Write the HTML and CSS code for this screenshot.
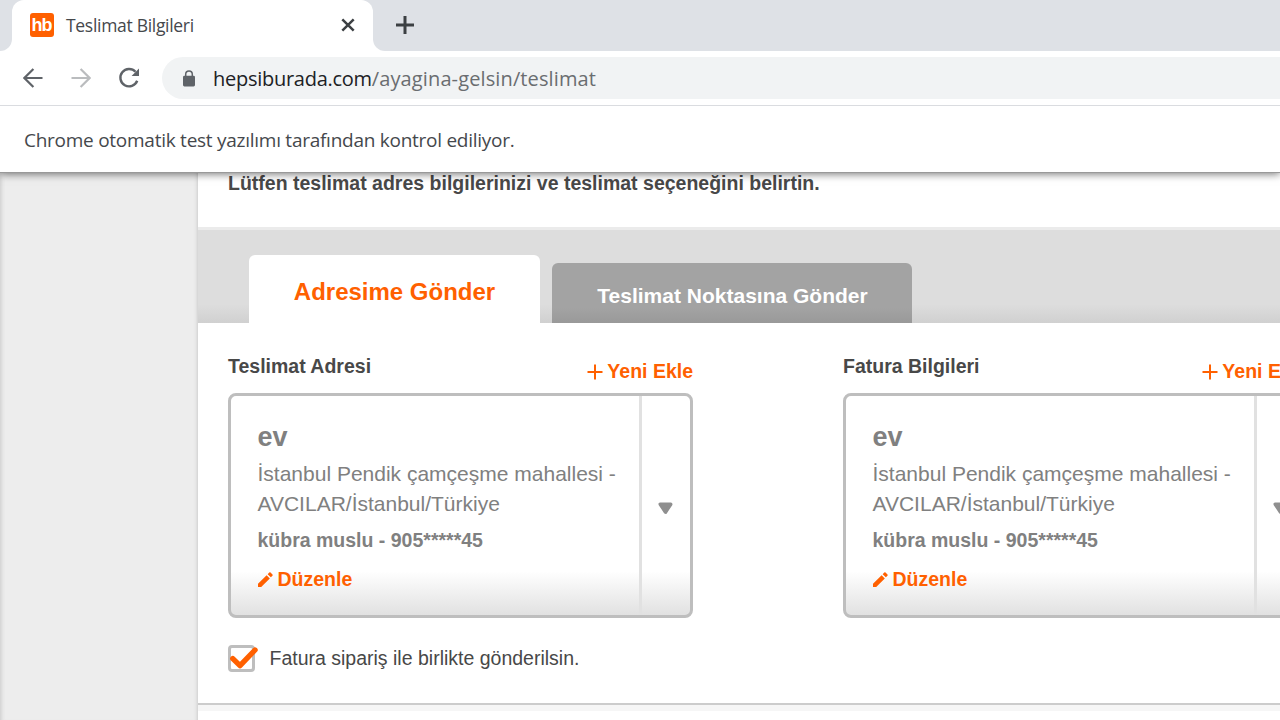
FILE: index.html
```html
<!DOCTYPE html>
<html lang="tr">
<head>
<meta charset="utf-8">
<title>Teslimat Bilgileri</title>
<link rel="stylesheet" href="styles.css">
</head>
<body>
<header class="browser">
  <div class="tabstrip">
    <div class="prev-tab"></div>
    <div class="tab">
      <span class="favicon">hb</span>
      <span class="tab-title">Teslimat Bilgileri</span>
      <svg class="close" width="14" height="14" viewBox="0 0 14 14"><path d="M1.3 1.3 12.7 12.7M12.7 1.3 1.3 12.7" fill="none" stroke="#3c4043" stroke-width="2.5"/></svg>
    </div>
    <div class="strip-rest">
      <svg width="18" height="18" viewBox="0 0 18 18"><path d="M9 0V18M0 9H18" fill="none" stroke="#3c4043" stroke-width="3"/></svg>
    </div>
  </div>
  <nav class="toolbar">
    <svg class="nav-icon" width="20" height="20" viewBox="0 0 20 20"><path d="M19.5 10H1.8M10.4 1 1.4 10l9 9" fill="none" stroke="#5f6368" stroke-width="2.2"/></svg>
    <svg class="nav-icon" width="20" height="20" viewBox="0 0 20 20"><path d="M.5 10h17.7M9.6 1l9 9-9 9" fill="none" stroke="#babcbe" stroke-width="2.2"/></svg>
    <svg class="nav-icon" width="22" height="22" viewBox="0 0 22 22"><path d="M17.5 4.8A8.7 8.7 0 1 0 19.2 13.8" fill="none" stroke="#5f6368" stroke-width="2.4"/><path d="M21 1.6v7.4h-7.4z" fill="#5f6368"/></svg>
    <div class="address">
      <svg width="12" height="17" viewBox="0 0 12 17"><rect y="5.8" width="12" height="10.6" rx="1.4" fill="#5f6368"/><path d="M2.7 6.5V4.2a3.3 3.3 0 0 1 6.6 0v2.3" fill="none" stroke="#5f6368" stroke-width="1.5"/></svg>
      <span class="url"><span class="host">hepsiburada.com</span>/ayagina-gelsin/teslimat</span>
    </div>
  </nav>
  <div class="infobar"><span>Chrome otomatik test yazılımı tarafından kontrol ediliyor.</span></div>
</header>
<main class="page">
  <aside class="gutter"></aside>
  <section class="content">
    <h1 class="intro">Lütfen teslimat adres bilgilerinizi ve teslimat seçeneğini belirtin.</h1>
    <div class="delivery-tabs">
      <div class="delivery-tab active">Adresime Gönder</div>
      <div class="delivery-tab">Teslimat Noktasına Gönder</div>
    </div>
    <div class="columns">
      <div class="column">
        <div class="column-head">
          <h2>Teslimat Adresi</h2>
          <a class="add"><svg width="16" height="16" viewBox="0 0 16 16"><path d="M8 .5v15M.5 8h15" fill="none" stroke="#ff6000" stroke-width="2"/></svg>Yeni Ekle</a>
        </div>
        <div class="card">
          <div class="details">
            <h3>ev</h3>
            <p class="street">İstanbul Pendik çamçeşme mahallesi -<br>AVCILAR/İstanbul/Türkiye</p>
            <p class="person">kübra muslu - 905*****45</p>
            <a class="edit"><svg width="15" height="15" viewBox="0 0 16 16"><path d="M0 16v-3.4L9.2 3.4l3.4 3.4L3.4 16zM10.3 2.3 12 .6q.7-.7 1.4 0l2 2q.7.7 0 1.4l-1.7 1.7z" fill="#ff6000"/></svg>Düzenle</a>
          </div>
          <div class="opener"><svg width="15" height="13" viewBox="0 0 15 13"><path d="M2.2 2.2h10.6L7.5 10.2z" fill="#8f8f8f" stroke="#8f8f8f" stroke-width="3.4" stroke-linejoin="round"/></svg></div>
        </div>
      </div>
      <div class="column">
        <div class="column-head">
          <h2>Fatura Bilgileri</h2>
          <a class="add"><svg width="16" height="16" viewBox="0 0 16 16"><path d="M8 .5v15M.5 8h15" fill="none" stroke="#ff6000" stroke-width="2"/></svg>Yeni Ekle</a>
        </div>
        <div class="card">
          <div class="details">
            <h3>ev</h3>
            <p class="street">İstanbul Pendik çamçeşme mahallesi -<br>AVCILAR/İstanbul/Türkiye</p>
            <p class="person">kübra muslu - 905*****45</p>
            <a class="edit"><svg width="15" height="15" viewBox="0 0 16 16"><path d="M0 16v-3.4L9.2 3.4l3.4 3.4L3.4 16zM10.3 2.3 12 .6q.7-.7 1.4 0l2 2q.7.7 0 1.4l-1.7 1.7z" fill="#ff6000"/></svg>Düzenle</a>
          </div>
          <div class="opener"><svg width="15" height="13" viewBox="0 0 15 13"><path d="M2.2 2.2h10.6L7.5 10.2z" fill="#8f8f8f" stroke="#8f8f8f" stroke-width="3.4" stroke-linejoin="round"/></svg></div>
        </div>
      </div>
    </div>
    <label class="invoice">
      <svg width="31" height="28" viewBox="0 0 31 28"><rect x="1.5" y="1.5" width="24" height="24" rx="2.5" fill="#fff" stroke="#bebebe" stroke-width="3"/><path d="M4.8 13.6 12 20.6 27 5" fill="none" stroke="#ff6000" stroke-width="5.4" stroke-linecap="round" stroke-linejoin="round"/></svg>
      <span>Fatura sipariş ile birlikte gönderilsin.</span>
    </label>
    <div class="next-section"></div>
  </section>
</main>
</body>
</html>
```
FILE: styles.css
```css
* { box-sizing: border-box; }
body { margin: 0; width: 1280px; height: 720px; overflow: hidden; background: #fff; font-family: "Liberation Sans", Arial, sans-serif; }
h1, h2, h3, p { margin: 0; }
svg { display: block; flex: none; }

.browser { position: relative; z-index: 1; font-family: "Open Sans", "Noto Sans", sans-serif; white-space: nowrap; background: #fff; }
.tabstrip { display: flex; height: 51px; background: #fff; }
.prev-tab { width: 12px; background: #dee1e6; border-bottom-right-radius: 12px; }
.tab { display: flex; align-items: center; width: 361px; padding: 0 18px 1px; background: linear-gradient(#dee1e6, #dee1e6) 0 0 / 100% 12px no-repeat; position: relative; z-index: 0; }
.tab::before { content: ""; position: absolute; inset: 0; z-index: -1; border-radius: 12px 12px 0 0; background: #fff; }
.favicon { width: 24px; height: 24px; border-radius: 3px; background: #ff6000; color: #fff; font: bold 18px/25px "Liberation Sans", sans-serif; letter-spacing: -1px; text-indent: -1px; text-align: center; }
.tab-title { margin-left: 12px; font-size: 17.5px; letter-spacing: -0.3px; color: #45484c; }
.close { margin-left: auto; }
.strip-rest { flex: 1; display: flex; align-items: center; padding: 0 0 1px 23px; background: #dee1e6; border-bottom-left-radius: 12px; }
.toolbar { display: flex; align-items: center; height: 55px; padding-left: 23px; border-bottom: 1px solid #dadce0; }
.nav-icon { margin-right: 28px; }
.nav-icon:nth-child(3) { margin: 0 22px 0 -1px; }
.address { flex: 1; display: flex; align-items: center; height: 42px; padding-left: 21px; border-radius: 21px 0 0 21px; background: #f1f3f4; }
.url { margin-left: 18px; font-size: 20px; letter-spacing: 0.12px; color: #6a6d70; }
.host { letter-spacing: -0.27px; color: #202124; }
.infobar { display: flex; align-items: center; height: 66px; padding: 2px 0 0 24px; font-size: 19px; letter-spacing: -0.26px; color: #45484c; box-shadow: 0 1px 0 #999, 0 2px 8px rgba(0, 0, 0, .55); clip-path: inset(0 0 -14px 0); }

.page { display: flex; height: 548px; }
.gutter { flex: none; width: 198px; background: #ededed; box-shadow: inset 5px 0 4px -4px #c8c8c8, inset -4px 0 4px -4px #bbb; }
.content { flex: none; width: 1082px; overflow: hidden; }
.intro { height: 58px; padding: 0 0 0 30px; font-size: 19.5px; line-height: 22px; color: #484848; border-bottom: 3px solid #ebebeb; }
.delivery-tabs { display: flex; align-items: flex-end; gap: 12px; height: 93px; padding-left: 51px; background: linear-gradient(#ddd 80%, #d0d0d0); }
.delivery-tab { width: 360px; height: 60px; border-radius: 6px 6px 0 0; background: linear-gradient(#a3a3a3 75%, #999); color: #fff; font-weight: bold; font-size: 21px; line-height: 66px; text-align: center; text-indent: 1px; }
.delivery-tab.active { width: 291px; height: 68px; background: #fff; color: #ff6000; font-size: 24px; line-height: 74px; text-indent: 0; }
.columns { display: flex; gap: 150px; padding: 31px 0 0 30px; }
.column { flex: none; width: 465px; }
.column-head { display: flex; justify-content: space-between; height: 39px; }
.column-head h2 { font-size: 19.5px; line-height: 24px; color: #484848; }
.add { display: flex; align-items: center; gap: 4.5px; height: 24px; margin-top: 5px; color: #ff6000; font-weight: bold; font-size: 19.5px; }
.add svg { margin-top: 2px; }
.card { display: flex; height: 225px; border: 3px solid #bebebe; border-radius: 8px; background: linear-gradient(#fff 80%, #e1e1e1); }
.details { width: 411px; padding: 26px 0 0 26.5px; border-right: 3px solid #e1e1e1; color: #808080; white-space: nowrap; }
.details h3 { font-size: 27px; line-height: 30px; }
.street { margin-top: 7px; font-size: 21px; line-height: 30px; }
.person { margin-top: 9px; font-size: 19.5px; font-weight: bold; line-height: 24px; }
.edit { display: flex; align-items: center; gap: 5px; margin-top: 15px; height: 24px; color: #ff6000; font-weight: bold; font-size: 19.5px; }
.edit svg { margin-top: 1px; }
.opener { flex: 1; display: flex; align-items: center; justify-content: center; padding: 5px 2px 0 0; }
.invoice { display: flex; align-items: center; height: 85px; padding: 0 0 4px 30px; font-size: 19.5px; color: #484848; }
.invoice span { margin-left: 10.5px; }
.next-section { height: 8px; border-top: 2px solid #ccc; background: #f6f6f6; }
```
